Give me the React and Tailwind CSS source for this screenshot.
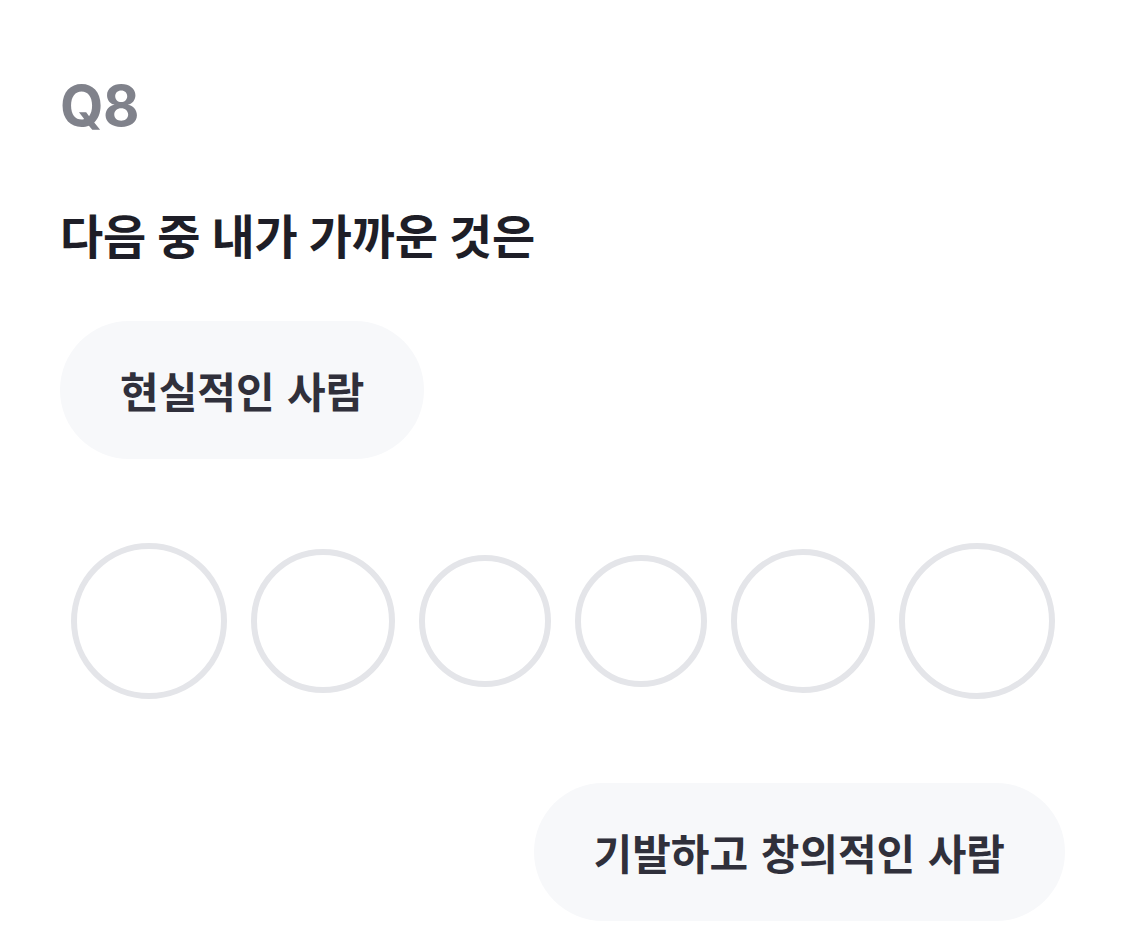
import React from 'react'

const scale = [156, 144, 132, 132, 144, 156]

function Choice({ label, className = '' }) {
  return (
    <button
      type="button"
      className={`flex h-[138px] items-center rounded-full bg-[#f7f8fa] px-[60px] text-[42px] font-semibold leading-none [word-spacing:3px] text-[#30303b] ${className}`}
    >
      {label}
    </button>
  )
}

export default function App() {
  return (
    <div className="min-h-screen bg-white font-['Noto_Sans_CJK_KR','Noto_Sans',sans-serif]">
      <div className="flex flex-col px-[60px] pt-[78px]">
        <div className="font-['Inter','Noto_Sans_CJK_KR',sans-serif] text-[56px] font-bold leading-none tracking-[-0.5px] text-[#80828b]">
          Q8
        </div>

        <h1 className="mt-[76px] text-[47px] font-bold leading-none tracking-[-0.3px] [word-spacing:1px] text-[#1e1e27]">
          다음 중 내가 가까운 것은
        </h1>

        <div className="mt-[64px] flex">
          <Choice label="현실적인 사람" />
        </div>

        <div className="mt-[84px] flex items-center justify-center gap-6">
          {scale.map((size, i) => (
            <button
              key={i}
              type="button"
              aria-label={`선택 ${i + 1}`}
              className="shrink-0 rounded-full border-[6px] border-[#e4e5e9] bg-white"
              style={{ width: size, height: size }}
            />
          ))}
        </div>

        <div className="mt-[84px] flex justify-end">
          <Choice label="기발하고 창의적인 사람" />
        </div>
      </div>
    </div>
  )
}
